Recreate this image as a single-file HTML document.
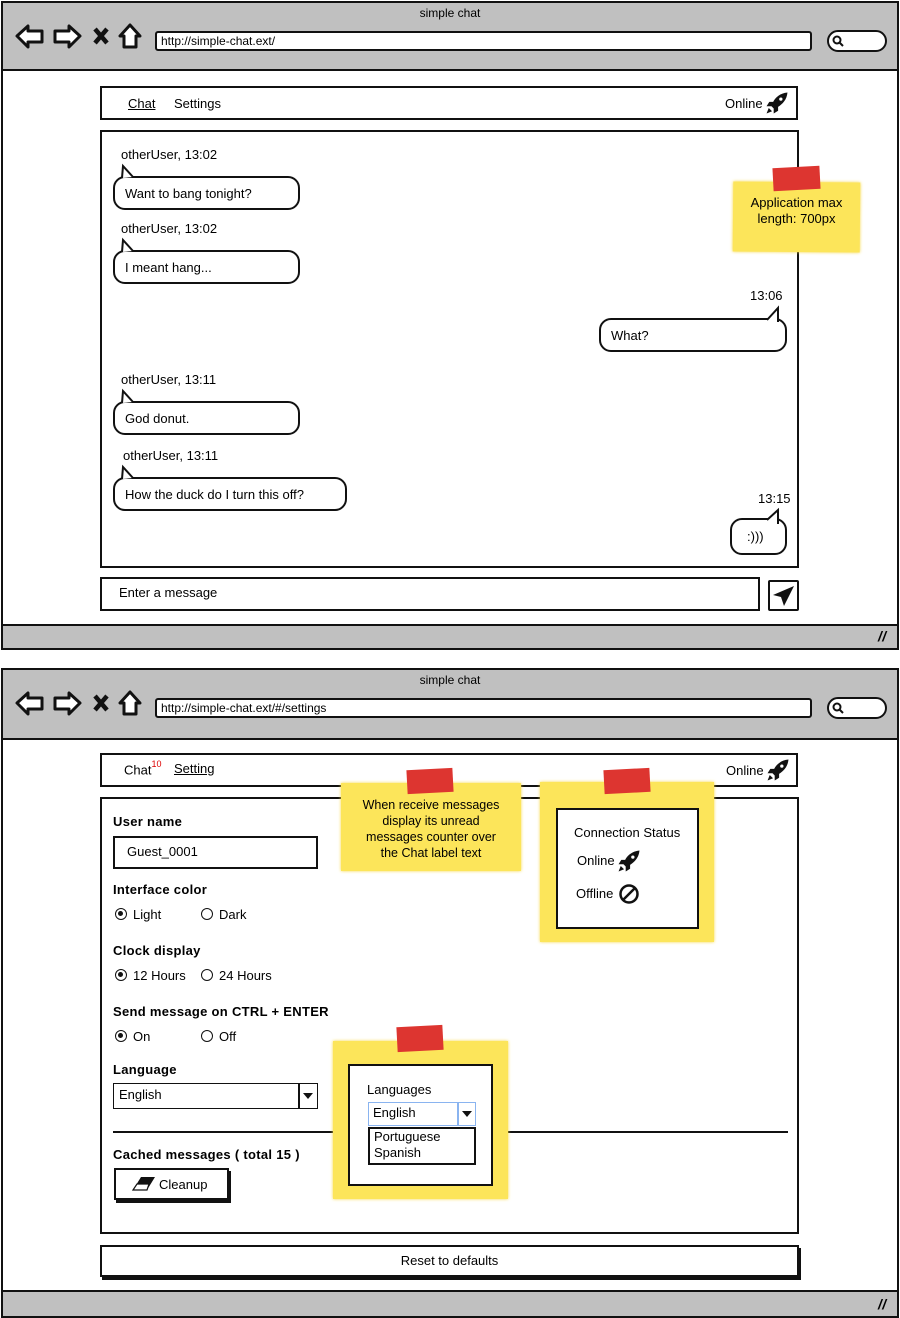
<!DOCTYPE html>
<html><head><meta charset="utf-8"><style>
*{box-sizing:border-box;margin:0;padding:0}
body{width:900px;height:1318px;position:relative;background:#fff;font-family:"Liberation Sans",sans-serif;font-size:13px;color:#000;overflow:hidden}
.a{position:absolute}
.win{border:2px solid #111;background:#fff}
.gray{background:#c0c0c0}
.box{border:2px solid #111;background:#fff}
.bub{border:2px solid #111;border-radius:12px;background:#fff;padding-left:10px;display:flex;align-items:center}
.t{white-space:nowrap}
.b{font-weight:bold;letter-spacing:0.3px}
.sticky{background:#fce55a;box-shadow:0 0 3px #f5d640}
.tape{background:#dd3530}
.rad{width:12px;height:12px;border:1.5px solid #111;border-radius:50%}
.rad.on::after{content:"";position:absolute;left:2px;top:2px;width:5px;height:5px;background:#111;border-radius:50%}
</style></head><body>

<!-- ============ WINDOW 1 ============ -->
<div class="a win" style="left:1px;top:1px;width:898px;height:649px"></div>
<div class="a gray" style="left:3px;top:3px;width:894px;height:68px;border-bottom:2px solid #111"></div>
<div class="a t" style="left:0;width:900px;text-align:center;top:6px;font-size:12px">simple chat</div>
<svg class="a" style="left:14px;top:22px" width="130" height="30" viewBox="0 0 130 30">
<path d="M3 14 L14 4 L14 9 L28 9 L28 20 L14 20 L14 25 Z" fill="#fff" stroke="#111" stroke-width="3" stroke-linejoin="round"/>
<path d="M66 14 L55 4 L55 9 L41 9 L41 20 L55 20 L55 25 Z" fill="#fff" stroke="#111" stroke-width="3" stroke-linejoin="round"/>
<path d="M81 7 L93 21 M93 7 L81 21" stroke="#111" stroke-width="4.5"/>
<path d="M116 3 L106 14 L110 14 L110 25 L122 25 L122 14 L126 14 Z" fill="#fff" stroke="#111" stroke-width="3" stroke-linejoin="round"/>
</svg>
<div class="a box t" style="left:155px;top:31px;width:657px;height:20px;border-radius:3px;padding-left:4px;line-height:16px;font-size:12px">http://simple-chat.ext/</div>
<div class="a box" style="left:827px;top:30px;width:60px;height:22px;border-radius:11px"></div>
<svg class="a" style="left:832px;top:35px" width="12" height="12"><circle cx="5" cy="5" r="3.5" fill="none" stroke="#111" stroke-width="2"/><path d="M7 7 L11 11" stroke="#111" stroke-width="2"/></svg>
<div class="a gray" style="left:3px;top:624px;width:894px;height:24px;border-top:2px solid #111"></div>
<div class="a t b" style="left:878px;top:628px;font-size:14px;font-style:italic">//</div>

<div class="a box" style="left:100px;top:86px;width:698px;height:34px"></div>
<div class="a t" style="left:128px;top:96px;text-decoration:underline">Chat</div>
<div class="a t" style="left:174px;top:96px">Settings</div>
<div class="a t" style="left:725px;top:96px">Online</div>
<svg class="a" style="left:766px;top:92px" width="22" height="22" viewBox="0 0 20 20"><path d="M19.5 0.5 C13 1 8.5 5 6.5 9 L3 9 L0.5 13 L5 13 L7 15 L7 19.5 L11 17 L11 13.5 C15 11 19 7 19.5 0.5 Z M0.5 19.5 L2.5 14.5 L5.5 17.5 Z" fill="#111"/><circle cx="13.5" cy="6.5" r="1.5" fill="#fff"/></svg>

<div class="a box" style="left:100px;top:130px;width:699px;height:438px"></div>
<div class="a t" style="left:121px;top:147px">otherUser, 13:02</div>
<div class="a bub" style="left:113px;top:176px;width:187px;height:34px">Want to bang tonight?</div>
<div class="a t" style="left:121px;top:221px">otherUser, 13:02</div>
<div class="a bub" style="left:113px;top:250px;width:187px;height:34px">I meant hang...</div>
<div class="a t" style="left:750px;top:288px">13:06</div>
<div class="a bub" style="left:599px;top:318px;width:188px;height:34px">What?</div>
<div class="a t" style="left:121px;top:372px">otherUser, 13:11</div>
<div class="a bub" style="left:113px;top:401px;width:187px;height:34px">God donut.</div>
<div class="a t" style="left:123px;top:448px">otherUser, 13:11</div>
<div class="a bub" style="left:113px;top:477px;width:234px;height:34px">How the duck do I turn this off?</div>
<div class="a t" style="left:758px;top:491px">13:15</div>
<div class="a bub" style="left:730px;top:518px;width:57px;height:37px;padding-left:15px">:)))</div>
<svg class="a" style="left:0;top:0" width="900" height="560">
<g fill="#fff" stroke="#111" stroke-width="2">
<path d="M122 178 L123 166 L133 177"/><path d="M122 252 L123 240 L133 251"/>
<path d="M122 403 L123 391 L133 402"/><path d="M122 479 L123 467 L133 478"/>
<path d="M767 320 L778 308 L778 322"/><path d="M767 520 L778 510 L778 524"/>
</g></svg>

<div class="a sticky" style="left:733px;top:182px;width:127px;height:70px;transform:rotate(0.5deg)"></div>
<div class="a tape" style="left:773px;top:167px;width:47px;height:23px;transform:rotate(-3deg)"></div>
<div class="a" style="left:733px;top:195px;width:127px;text-align:center;line-height:16px">Application max length: 700px</div>

<div class="a box" style="left:100px;top:577px;width:660px;height:34px"></div>
<div class="a t" style="left:119px;top:585px">Enter a message</div>
<div class="a box" style="left:768px;top:580px;width:31px;height:31px;border-radius:2px"></div>
<svg class="a" style="left:772px;top:584px" width="24" height="24" viewBox="0 0 24 24"><path d="M22 2 L1 11 L9 13 L12 22 Z" fill="#111"/></svg>

<!-- ============ WINDOW 2 ============ -->
<div class="a win" style="left:1px;top:668px;width:898px;height:650px"></div>
<div class="a gray" style="left:3px;top:670px;width:894px;height:70px;border-bottom:2px solid #111"></div>
<div class="a t" style="left:0;width:900px;text-align:center;top:673px;font-size:12px">simple chat</div>
<svg class="a" style="left:14px;top:689px" width="130" height="30" viewBox="0 0 130 30">
<path d="M3 14 L14 4 L14 9 L28 9 L28 20 L14 20 L14 25 Z" fill="#fff" stroke="#111" stroke-width="3" stroke-linejoin="round"/>
<path d="M66 14 L55 4 L55 9 L41 9 L41 20 L55 20 L55 25 Z" fill="#fff" stroke="#111" stroke-width="3" stroke-linejoin="round"/>
<path d="M81 7 L93 21 M93 7 L81 21" stroke="#111" stroke-width="4.5"/>
<path d="M116 3 L106 14 L110 14 L110 25 L122 25 L122 14 L126 14 Z" fill="#fff" stroke="#111" stroke-width="3" stroke-linejoin="round"/>
</svg>
<div class="a box t" style="left:155px;top:698px;width:657px;height:20px;border-radius:3px;padding-left:4px;line-height:16px;font-size:12px">http://simple-chat.ext/#/settings</div>
<div class="a box" style="left:827px;top:697px;width:60px;height:22px;border-radius:11px"></div>
<svg class="a" style="left:832px;top:702px" width="12" height="12"><circle cx="5" cy="5" r="3.5" fill="none" stroke="#111" stroke-width="2"/><path d="M7 7 L11 11" stroke="#111" stroke-width="2"/></svg>
<div class="a gray" style="left:3px;top:1290px;width:894px;height:26px;border-top:2px solid #111"></div>
<div class="a t b" style="left:878px;top:1296px;font-size:14px;font-style:italic">//</div>

<div class="a box" style="left:100px;top:753px;width:698px;height:34px"></div>
<div class="a t" style="left:124px;top:761px">Chat<sup style="color:#d00;font-size:9px;position:relative;top:-2px">10</sup></div>
<div class="a t" style="left:174px;top:761px;text-decoration:underline">Setting</div>
<div class="a t" style="left:726px;top:763px">Online</div>
<svg class="a" style="left:767px;top:759px" width="22" height="22" viewBox="0 0 20 20"><path d="M19.5 0.5 C13 1 8.5 5 6.5 9 L3 9 L0.5 13 L5 13 L7 15 L7 19.5 L11 17 L11 13.5 C15 11 19 7 19.5 0.5 Z M0.5 19.5 L2.5 14.5 L5.5 17.5 Z" fill="#111"/><circle cx="13.5" cy="6.5" r="1.5" fill="#fff"/></svg>

<div class="a box" style="left:100px;top:797px;width:699px;height:437px"></div>
<div class="a t b" style="left:113px;top:814px">User name</div>
<div class="a box t" style="left:113px;top:836px;width:205px;height:33px;padding-left:12px;line-height:28px">Guest_0001</div>
<div class="a t b" style="left:113px;top:882px">Interface color</div>
<div class="a rad on" style="left:115px;top:908px"></div><div class="a t" style="left:133px;top:907px">Light</div>
<div class="a rad" style="left:201px;top:908px"></div><div class="a t" style="left:219px;top:907px">Dark</div>
<div class="a t b" style="left:113px;top:943px">Clock display</div>
<div class="a rad on" style="left:115px;top:969px"></div><div class="a t" style="left:133px;top:968px">12 Hours</div>
<div class="a rad" style="left:201px;top:969px"></div><div class="a t" style="left:219px;top:968px">24 Hours</div>
<div class="a t b" style="left:113px;top:1004px">Send message on CTRL + ENTER</div>
<div class="a rad on" style="left:115px;top:1030px"></div><div class="a t" style="left:133px;top:1029px">On</div>
<div class="a rad" style="left:201px;top:1030px"></div><div class="a t" style="left:219px;top:1029px">Off</div>
<div class="a t b" style="left:113px;top:1062px">Language</div>
<div class="a box t" style="left:113px;top:1083px;width:205px;height:26px;padding-left:5px;line-height:22px;border-width:1.5px">English</div>
<div class="a" style="left:298px;top:1084px;width:1.5px;height:24px;background:#111"></div>
<svg class="a" style="left:302px;top:1092px" width="12" height="8"><path d="M1 1 L11 1 L6 7 Z" fill="#111"/></svg>
<div class="a" style="left:113px;top:1131px;width:675px;height:1.5px;background:#111"></div>
<div class="a t b" style="left:113px;top:1147px">Cached messages ( total 15 )</div>
<div class="a box" style="left:114px;top:1168px;width:115px;height:32px;box-shadow:2px 3px 0 #111"></div>
<svg class="a" style="left:131px;top:1176px" width="26" height="16" viewBox="0 0 26 16"><path d="M10 1 L24 1 L16 14 L2 14 Z" fill="#111"/><path d="M2 14 L6 8 L18 8 L16 14 Z" fill="#fff" stroke="#111" stroke-width="1.2"/></svg>
<div class="a t" style="left:159px;top:1177px">Cleanup</div>

<div class="a box" style="left:100px;top:1245px;width:699px;height:32px;box-shadow:2px 3px 0 #111"></div>
<div class="a t" style="left:100px;width:699px;text-align:center;top:1253px">Reset to defaults</div>

<!-- stickies -->
<div class="a sticky" style="left:341px;top:783px;width:180px;height:88px"></div>
<div class="a tape" style="left:407px;top:769px;width:46px;height:24px;transform:rotate(-3deg)"></div>
<div class="a" style="left:356px;top:797px;width:150px;text-align:center;line-height:16px;font-size:12.5px">When receive messages display its unread messages counter over the Chat label text</div>

<div class="a sticky" style="left:540px;top:782px;width:174px;height:160px"></div>
<div class="a tape" style="left:604px;top:769px;width:46px;height:24px;transform:rotate(-3deg)"></div>
<div class="a box" style="left:556px;top:808px;width:143px;height:121px"></div>
<div class="a t" style="left:574px;top:825px">Connection Status</div>
<div class="a t" style="left:577px;top:853px">Online</div>
<svg class="a" style="left:618px;top:850px" width="22" height="22" viewBox="0 0 20 20"><path d="M19.5 0.5 C13 1 8.5 5 6.5 9 L3 9 L0.5 13 L5 13 L7 15 L7 19.5 L11 17 L11 13.5 C15 11 19 7 19.5 0.5 Z M0.5 19.5 L2.5 14.5 L5.5 17.5 Z" fill="#111"/><circle cx="13.5" cy="6.5" r="1.5" fill="#fff"/></svg>
<div class="a t" style="left:576px;top:886px">Offline</div>
<svg class="a" style="left:618px;top:883px" width="22" height="22"><circle cx="11" cy="11" r="8.5" fill="none" stroke="#111" stroke-width="2.5"/><path d="M5 17 L17 5" stroke="#111" stroke-width="2.5"/></svg>

<div class="a sticky" style="left:333px;top:1041px;width:175px;height:158px"></div>
<div class="a tape" style="left:397px;top:1026px;width:46px;height:25px;transform:rotate(-3deg)"></div>
<div class="a box" style="left:348px;top:1064px;width:145px;height:122px"></div>
<div class="a t" style="left:367px;top:1082px">Languages</div>
<div class="a t" style="left:368px;top:1102px;width:108px;height:24px;border:1.5px solid #8ab4f0;background:#fff;padding-left:4px;line-height:20px">English</div>
<div class="a" style="left:457px;top:1103px;width:1.5px;height:22px;background:#8ab4f0"></div>
<svg class="a" style="left:461px;top:1110px" width="12" height="8"><path d="M1 1 L11 1 L6 7 Z" fill="#111"/></svg>
<div class="a" style="left:368px;top:1127px;width:108px;height:38px;border:2px solid #111;background:#fff;padding-left:4px;line-height:16px">Portuguese<br>Spanish</div>

</body></html>
